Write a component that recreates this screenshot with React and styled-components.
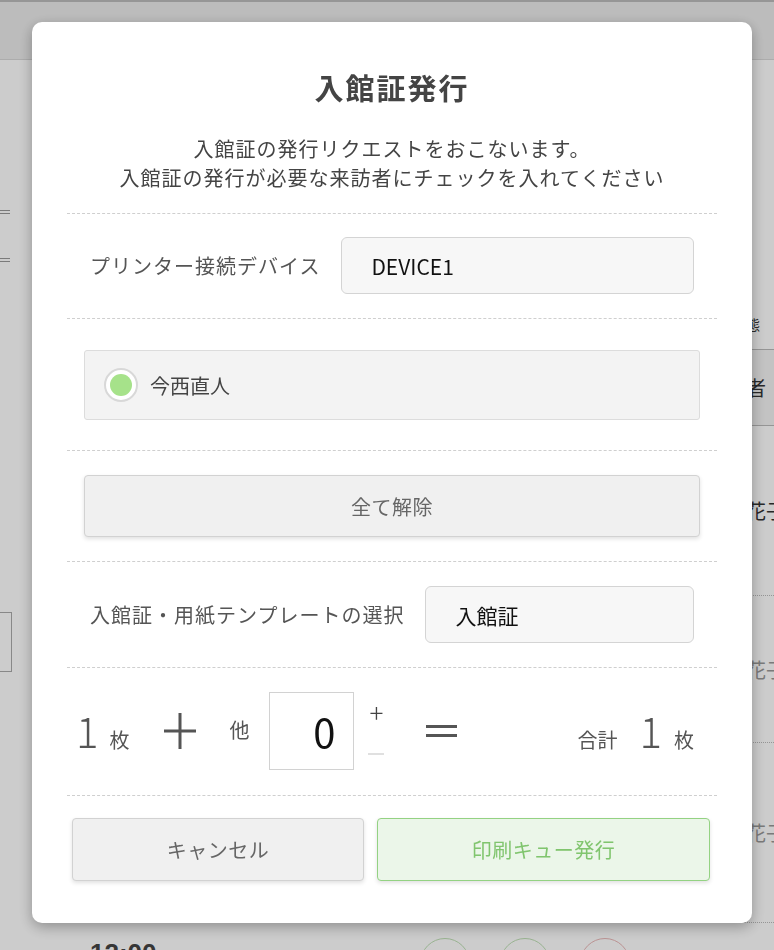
import React, { useState } from "react";
import styled, { createGlobalStyle } from "styled-components";

const GlobalStyle = createGlobalStyle`
  html, body {
    margin: 0;
    padding: 0;
  }
  body {
    font-family: "Noto Sans CJK JP", "Noto Sans", sans-serif;
    background: #fff;
    color: #333;
  }
  * {
    box-sizing: border-box;
  }
`;

// ---- page behind the dialog ----

const Page = styled.div`
  height: 950px;
  overflow: hidden;
  display: flex;
  flex-direction: column;
  background: #fff;
`;

const TopBar = styled.div`
  height: 60px;
  flex: none;
  background: #ececec;
  border-top: 2px solid #bcbcbc;
  border-bottom: 1px solid #d8d8d8;
`;

const PageBody = styled.div`
  flex: 1;
  display: flex;
  justify-content: space-between;
`;

const SideCol = styled.div`
  width: 30px;
  display: flex;
  flex-direction: column;
`;

const Handle = styled.div`
  width: 10px;
  height: 4px;
  margin-top: ${p => p.$top}px;
  border-top: 1px solid #999;
  border-bottom: 1px solid #999;
`;

const GhostInput = styled.div`
  width: 12px;
  height: 60px;
  margin-top: 350px;
  border: 1px solid #aaa;
  border-left: none;
`;

const TableCol = styled.div`
  width: 30px;
  padding-top: 238px;
  display: flex;
  flex-direction: column;
`;

const TableCell = styled.div`
  height: ${p => p.$h}px;
  display: flex;
  align-items: center;
  padding-left: 2px;
  font-size: ${p => p.$size || 20}px;
  color: ${p => p.$color || "#333"};
  background: ${p => p.$bg || "transparent"};
  border-bottom: 1px ${p => (p.$dotted ? "dotted" : "solid")} #bbb;
  white-space: nowrap;
  overflow: hidden;
`;

const BottomStrip = styled.div`
  height: 22px;
  flex: none;
  display: flex;
  align-items: flex-end;
  padding-left: 90px;
  gap: 30px;
  overflow: hidden;
`;

const Clock = styled.div`
  font-family: "Liberation Sans", sans-serif;
  font-weight: bold;
  font-size: 26px;
  color: #444;
  line-height: 1;
  margin-bottom: -16px;
  width: 300px;
`;

const Ring = styled.div`
  width: 50px;
  height: 50px;
  border-radius: 50%;
  margin-bottom: -38px;
  border: 1px solid ${p => p.$color};
`;

// ---- dialog ----

const Overlay = styled.div`
  position: fixed;
  inset: 0;
  background: rgba(0, 0, 0, 0.2);
  display: flex;
  align-items: flex-start;
  padding: 22px 0 0 32px;
`;

const Modal = styled.div`
  width: 720px;
  background: #fff;
  border-radius: 10px;
  box-shadow: 0 4px 14px rgba(0, 0, 0, 0.3);
  padding: 0 35px 42px;
`;

const Head = styled.div`
  padding: 45px 0 21px;
  text-align: center;
`;

const Title = styled.h2`
  margin: 0;
  font-size: 29px;
  line-height: 40px;
  font-weight: bold;
  letter-spacing: 2px;
  color: #444;
`;

const Lead = styled.p`
  margin: 27px 0 0;
  font-size: 20px;
  line-height: 29px;
  letter-spacing: 1px;
  color: #444;
`;

const Section = styled.div`
  border-top: 1px dashed #cfcfcf;
  padding: ${p => p.$pad};
`;

const FieldRow = styled.div`
  display: flex;
  align-items: center;
  gap: 21px;
  padding: 0 23px;
`;

const FieldLabel = styled.span`
  flex: none;
  font-size: 20px;
  letter-spacing: 1px;
  color: #555;
`;

const FieldBox = styled.div`
  flex: 1;
  height: 57px;
  display: flex;
  align-items: center;
  padding-left: 29px;
  background: #f7f7f7;
  border: 1px solid #d4d4d4;
  border-radius: 6px;
  font-size: 21px;
  color: #111;
`;

const VisitorCard = styled.label`
  margin: 0 17px;
  height: 70px;
  display: flex;
  align-items: center;
  gap: 12px;
  padding-left: 19px;
  background: #f3f3f3;
  border: 1px solid #dcdcdc;
  border-radius: 3px;
  font-size: 20px;
  color: #444;
  cursor: pointer;
`;

const Radio = styled.span`
  width: 34px;
  height: 34px;
  border-radius: 50%;
  background: #fff;
  border: 2px solid #d8d8d8;
  display: flex;
  align-items: center;
  justify-content: center;

  &::after {
    content: "";
    width: 22px;
    height: 22px;
    border-radius: 50%;
    background: ${p => (p.$on ? "#a6e28a" : "transparent")};
  }
`;

const Button = styled.button`
  font-family: inherit;
  height: ${p => p.$h || 62}px;
  font-size: 20px;
  letter-spacing: 0.5px;
  border-radius: 4px;
  cursor: pointer;
  color: ${p => (p.$primary ? "#80c56e" : "#666")};
  background: ${p => (p.$primary ? "#ebf6e9" : "#f0f0f0")};
  border: 1px solid ${p => (p.$primary ? "#94d283" : "#d2d2d2")};
  box-shadow: 0 2px 4px rgba(0, 0, 0, 0.12);
`;

const WideButton = styled(Button)`
  display: block;
  width: calc(100% - 34px);
  margin: 0 17px;
`;

const CountRow = styled.div`
  display: flex;
  align-items: center;
  padding: 0 23px 0 9px;
`;

const Group = styled.div`
  display: flex;
  align-items: baseline;
  margin-left: ${p => p.$ml || 0}px;
`;

const BigNum = styled.span`
  font-size: 42px;
  line-height: 1;
  font-weight: 300;
  color: #555;
  margin-left: ${p => p.$ml || 0}px;
`;

const Unit = styled.span`
  font-size: 20px;
  color: #555;
  margin-left: ${p => p.$ml || 0}px;
`;

const Sign = styled.svg`
  flex: none;
  margin-left: ${p => p.$ml || 0}px;
`;

const OtherLabel = styled.span`
  font-size: 20px;
  color: #555;
  margin-left: 33px;
  margin-top: -4px;
`;

const ExtraBox = styled.div`
  width: 85px;
  height: 78px;
  margin-left: 20px;
  border: 1px solid #d2d2d2;
  display: flex;
  align-items: center;
  justify-content: flex-end;
  padding-right: 18px;
  font-size: 40px;
  color: #111;
`;

const Stepper = styled.div`
  height: 52px;
  margin-left: 14px;
  margin-top: -4px;
  display: flex;
  flex-direction: column;
  align-items: center;
  justify-content: space-between;
`;

const StepPlus = styled.span`
  font-size: 26px;
  line-height: 18px;
  font-weight: 300;
  color: #444;
  cursor: pointer;
`;

const StepMinus = styled.span`
  width: 16px;
  height: 2px;
  background: #e0e0e0;
`;

const Spacer = styled.div`
  flex: 1;
`;

const Footer = styled.div`
  display: flex;
  gap: 13px;
  padding: 0 7px 0 5px;
`;

export default function App() {
  const [extra, setExtra] = useState(0);
  const [checked, setChecked] = useState(true);
  const total = (checked ? 1 : 0) + extra;

  return (
    <>
      <GlobalStyle />
      <Page>
        <TopBar />
        <PageBody>
          <SideCol>
            <Handle $top={150} />
            <Handle $top={44} />
            <GhostInput />
          </SideCol>
          <TableCol>
            <TableCell $h={52} $size={14}>態</TableCell>
            <TableCell $h={76} $bg="#f4f4f4">者</TableCell>
            <TableCell $h={170} $dotted>花子</TableCell>
            <TableCell $h={147} $dotted $color="#999">花子</TableCell>
            <TableCell $h={180} $dotted $color="#999">花子</TableCell>
          </TableCol>
        </PageBody>
        <BottomStrip>
          <Clock>12:00</Clock>
          <Ring $color="#bfe0b5" />
          <Ring $color="#bfe0b5" />
          <Ring $color="#eab8b8" />
        </BottomStrip>
      </Page>

      <Overlay>
        <Modal>
          <Head>
            <Title>入館証発行</Title>
            <Lead>
              入館証の発行リクエストをおこないます。
              <br />
              入館証の発行が必要な来訪者にチェックを入れてください
            </Lead>
          </Head>

          <Section $pad="23px 0 24px">
            <FieldRow>
              <FieldLabel>プリンター接続デバイス</FieldLabel>
              <FieldBox>DEVICE1</FieldBox>
            </FieldRow>
          </Section>

          <Section $pad="31px 0 30px">
            <VisitorCard onClick={() => setChecked(c => !c)}>
              <Radio $on={checked} />
              今西直人
            </VisitorCard>
          </Section>

          <Section $pad="24px 0 24px">
            <WideButton onClick={() => setChecked(false)}>全て解除</WideButton>
          </Section>

          <Section $pad="24px 0 24px">
            <FieldRow>
              <FieldLabel>入館証・用紙テンプレートの選択</FieldLabel>
              <FieldBox>入館証</FieldBox>
            </FieldRow>
          </Section>

          <Section $pad="24px 0 25px">
            <CountRow>
              <Group>
                <BigNum>{checked ? 1 : 0}</BigNum>
                <Unit $ml={11}>枚</Unit>
              </Group>
              <Sign $ml={35} width="32" height="38" viewBox="0 0 32 38">
                <path d="M0 19H32M16 1V37" stroke="#555" strokeWidth="3" />
              </Sign>
              <OtherLabel>他</OtherLabel>
              <ExtraBox>{extra}</ExtraBox>
              <Stepper>
                <StepPlus onClick={() => setExtra(n => n + 1)}>+</StepPlus>
                <StepMinus onClick={() => setExtra(n => Math.max(0, n - 1))} />
              </Stepper>
              <Sign $ml={42} width="31" height="12" viewBox="0 0 31 12">
                <path d="M0 1.5H31M0 10.5H31" stroke="#555" strokeWidth="3" />
              </Sign>
              <Spacer />
              <Group>
                <Unit>合計</Unit>
                <BigNum $ml={22}>{total}</BigNum>
                <Unit $ml={12}>枚</Unit>
              </Group>
            </CountRow>
          </Section>

          <Section $pad="22px 0 0">
            <Footer>
              <Button $h={63} style={{ width: 292 }}>キャンセル</Button>
              <Button $h={63} $primary style={{ flex: 1 }}>印刷キュー発行</Button>
            </Footer>
          </Section>
        </Modal>
      </Overlay>
    </>
  );
}
